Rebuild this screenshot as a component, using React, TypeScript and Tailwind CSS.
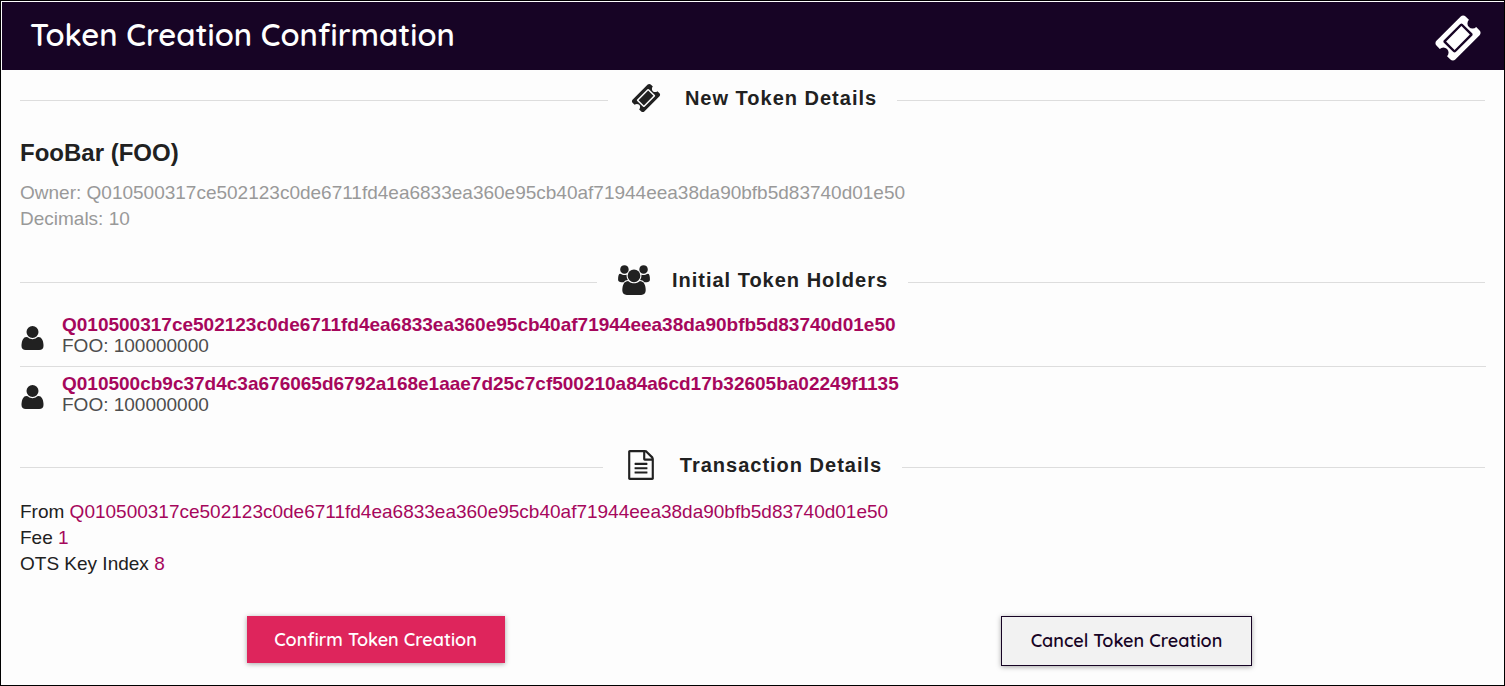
import type { ReactNode } from "react";

const TICKET =
  "M1024 452l316 316-572 572-316-316zM813 1423l610-610q19-19 19-45t-19-45l-354-354q-18-18-45-18t-45 18l-610 610q-19 19-19 45t19 45l354 354q18 18 45 18t45-18zM1702 794l-907 908q-37 37-90.5 37t-90.5-37l-126-126q56-56 56-136t-56-136-136-56-136 56l-125-126q-37-37-37-90.5t37-90.5l907-906q37-37 90.5-37t90.5 37l125 125q-56 56-56 136t56 136 136 56 136-56l126 125q37 37 37 90.5t-37 90.5z";

const PERSON =
  "M1728 1533q0 120-73 189.5t-194 69.5h-874q-121 0-194-69.5t-73-189.5q0-53 3.5-103.5t14-109 26.5-108.5 43-97.5 62-81 85.5-53.5 111.5-20q10 0 43 21.5t73 48 107 48 135 21.5 135-21.5 107-48 73-48 43-21.5q61 0 111.5 20t85.5 53.5 62 81 43 97.5 26.5 108.5 14 109 3.5 103.5zM1408 640q0 159-112.5 271.5t-271.5 112.5-271.5-112.5-112.5-271.5 112.5-271.5 271.5-112.5 271.5 112.5 112.5 271.5z";

const GROUP =
  PERSON +
  "M657 896q-162 5-265 128h-134q-82 0-138-40.5t-56-118.5q0-353 124-353 6 0 43.5 21t97.5 42.5 119 21.5q67 0 133-23-5 37-5 66 0 139 81 256zM704 256q0 106-75 181t-181 75-181-75-75-181 75-181 181-75 181 75 75 181zM1984 865q0 78-56 118.5t-138 40.5h-134q-103-123-265-128 81-117 81-256 0-29-5-66 66 23 133 23 59 0 119-21.5t97.5-42.5 43.5-21q124 0 124 353zM1856 256q0 106-75 181t-181 75-181-75-75-181 75-181 181-75 181 75 75 181z";

const FILE_TEXT =
  "M1596 380q28 28 48 76t20 88v1152q0 40-28 68t-68 28h-1344q-40 0-68-28t-28-68v-1600q0-40 28-68t68-28h896q40 0 88 20t76 48zm-444-244v376h376q-10-29-22-41l-313-313q-12-12-41-22zm384 1528v-1024h-416q-40 0-68-28t-28-68v-416h-768v1536h1280zm-1024-864q0-14 9-23t23-9h704q14 0 23 9t9 23v64q0 14-9 23t-23 9h-704q-14 0-23-9t-9-23v-64zm736 224q14 0 23 9t9 23v64q0 14-9 23t-23 9h-704q-14 0-23-9t-9-23v-64q0-14 9-23t23-9h704zm0 256q14 0 23 9t9 23v64q0 14-9 23t-23 9h-704q-14 0-23-9t-9-23v-64q0-14 9-23t23-9h704z";

function Icon({ d, box, className }: { d: string; box: string; className: string }) {
  return (
    <svg viewBox={box} className={className} fill="currentColor" fillRule="evenodd" aria-hidden="true">
      <path d={d} />
    </svg>
  );
}

function SectionHeading({ icon, children, className }: { icon: ReactNode; children: ReactNode; className: string }) {
  return (
    <div className={`mr-px flex h-[30px] items-center ${className}`}>
      <span className="mt-1 h-px flex-1 bg-[#dddddd]" />
      <h2 className="flex items-center px-5 text-xl leading-[30px] font-bold tracking-wider">
        {icon}
        {children}
      </h2>
      <span className="mt-1 h-px flex-1 bg-[#dddddd]" />
    </div>
  );
}

const OWNER = "Q010500317ce502123c0de6711fd4ea6833ea360e95cb40af71944eea38da90bfb5d83740d01e50";

const holders = [
  { address: OWNER, amount: "FOO: 100000000" },
  {
    address: "Q010500cb9c37d4c3a676065d6792a168e1aae7d25c7cf500210a84a6cd17b32605ba02249f1135",
    amount: "FOO: 100000000",
  },
];

const transaction = [
  { label: "From", value: OWNER },
  { label: "Fee", value: "1" },
  { label: "OTS Key Index", value: "8" },
];

export default function App() {
  return (
    <div className="border border-black bg-[#fdfdfd] pt-px pl-px font-['Liberation_Sans',Arial,sans-serif] text-[19px] text-[#212121]">
      <header className="flex h-[68px] items-center justify-between bg-[#170425] pr-[22px] pb-0.5 pl-7 text-white">
        <h1 className="font-[Quicksand,Lato,sans-serif] text-[31px] leading-10 font-semibold">
          Token Creation Confirmation
        </h1>
        <Icon d={TICKET} box="0 0 1792 1792" className="mt-1.5 size-12" />
      </header>

      <main className="px-[18px] pb-[19px]">
        <SectionHeading
          className="mt-[13px]"
          icon={<Icon d={TICKET} box="0 0 1792 1792" className="mr-6 ml-[3px] size-[30px]" />}
        >
          New Token Details
        </SectionHeading>
        <h3 className="mt-[26px] text-2xl leading-7 font-bold">FooBar (FOO)</h3>
        <div className="mt-[13px] leading-[26px] text-[#999999]">
          <p>Owner: {OWNER}</p>
          <p>Decimals: 10</p>
        </div>

        <SectionHeading
          className="mt-[33px]"
          icon={<Icon d={GROUP} box="0 0 2048 1792" className="mr-[21px] h-[30px] w-[34px]" />}
        >
          Initial Token Holders
        </SectionHeading>
        <ul className="mt-[13px] divide-y divide-[#dddddd]">
          {holders.map((holder) => (
            <li key={holder.address} className="flex pt-1.5 pb-2.5 leading-[21px]">
              <Icon d={PERSON} box="320 256 1408 1536" className="mt-3 mr-[18px] ml-px h-6 w-[23px]" />
              <div>
                <a href="#" className="block font-bold text-[#a6075c]">
                  {holder.address}
                </a>
                <p className="text-[#4d4d4d]">{holder.amount}</p>
              </div>
            </li>
          ))}
        </ul>

        <SectionHeading
          className="mt-[25px]"
          icon={<Icon d={FILE_TEXT} box="0 0 1792 1792" className="mr-6 ml-[3px] size-[30px]" />}
        >
          Transaction Details
        </SectionHeading>
        <div className="mt-[19px] leading-[26px]">
          {transaction.map((row) => (
            <p key={row.label}>
              {row.label} <span className="text-[#a6075c]">{row.value}</span>
            </p>
          ))}
        </div>

        <div className="-mx-[18px] mt-[39px] grid grid-cols-2 items-start justify-items-center font-[Quicksand,Lato,sans-serif] text-lg">
          <button
            type="button"
            className="mr-1 h-[47px] w-[258px] bg-[#de255c] font-semibold text-white shadow-[0_1px_5px_rgba(0,0,0,0.35)]"
          >
            Confirm Token Creation
          </button>
          <button
            type="button"
            className="mr-1 h-[50px] w-[251px] border border-[#170425] bg-[#f2f2f2] font-semibold text-[#170425] shadow-[0_1px_5px_rgba(0,0,0,0.35)]"
          >
            Cancel Token Creation
          </button>
        </div>
      </main>
    </div>
  );
}
